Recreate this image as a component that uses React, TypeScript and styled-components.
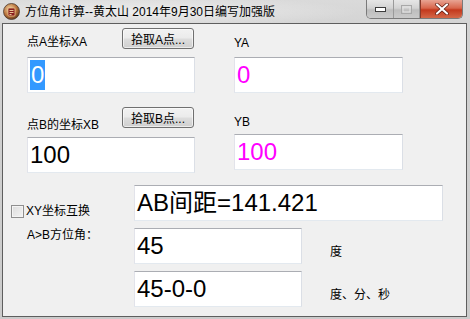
import styled, { createGlobalStyle } from "styled-components";

const GlobalStyle = createGlobalStyle`
  html, body {
    margin: 0;
    padding: 0;
    background: #cfcfcf;
  }
  body {
    font-family: "Liberation Sans", "Noto Sans CJK SC", sans-serif;
    font-size: 12px;
    color: #000;
  }
`;

const Window = styled.div`
  width: 470px;
  height: 319px;
  display: flex;
  flex-direction: column;
  background: linear-gradient(180deg, #dadada 0%, #d2d2d2 10%, #cbcbcb 100%);
  box-sizing: border-box;
`;

const TitleBar = styled.div`
  height: 23px;
  display: flex;
  align-items: flex-start;
  flex-shrink: 0;
  background: radial-gradient(ellipse 220px 16px at 140px 12px, rgba(255,255,255,0.55), rgba(255,255,255,0) 100%);
`;

const TitleIcon = styled.svg`
  margin: 3px 0 0 3px;
  flex-shrink: 0;
`;

const TitleText = styled.div`
  margin: 5px 0 0 5px;
  font-size: 12px;
  line-height: 14px;
  white-space: nowrap;
  color: #000;
`;

const CaptionButtons = styled.div`
  margin-left: auto;
  margin-right: 7px;
  display: flex;
  height: 19px;
  border: 1px solid #7a7a7a;
  border-top: none;
  border-radius: 0 0 5px 5px;
  overflow: hidden;
  box-sizing: border-box;
`;

const CaptionButton = styled.div<{ $w: number; $close?: boolean }>`
  width: ${(p) => p.$w}px;
  height: 100%;
  display: flex;
  align-items: center;
  justify-content: center;
  box-sizing: border-box;
  border-left: ${(p) => (p.$close ? "1px solid #8a3a2a" : "none")};
  border-right: ${(p) => (p.$close ? "none" : "1px solid #9a9a9a")};
  background: ${(p) =>
    p.$close
      ? "linear-gradient(180deg, #e8a493 0%, #d8664c 45%, #c3391d 55%, #d46848 100%)"
      : "linear-gradient(180deg, #e6e6e6 0%, #d3d3d3 45%, #bdbdbd 55%, #cacaca 100%)"};
`;

const Client = styled.div`
  flex: 1;
  margin: 0 3px 2px 2px;
  border: 1px solid #5e5e5e;
  background: #f0f0f0;
  padding-top: 4px;
  display: flex;
  flex-direction: column;
`;

const PairRow = styled.div<{ $top?: number }>`
  display: flex;
  margin-left: 24px;
  margin-top: ${(p) => p.$top ?? 0}px;
`;

const FieldCol = styled.div<{ $w: number; $left?: number }>`
  width: ${(p) => p.$w}px;
  margin-left: ${(p) => p.$left ?? 0}px;
  display: flex;
  flex-direction: column;
`;

const FieldHead = styled.div<{ $h: number }>`
  height: ${(p) => p.$h}px;
  display: flex;
  justify-content: space-between;
  align-items: flex-start;
`;

const Label = styled.div<{ $top?: number }>`
  margin-top: ${(p) => p.$top ?? 0}px;
  font-size: 12px;
  line-height: 15px;
  white-space: nowrap;
`;

const PickButton = styled.button`
  width: 72px;
  height: 21px;
  margin: 0 1px 0 0;
  padding: 0;
  font-family: inherit;
  font-size: 12px;
  color: #000;
  border: 1px solid #707070;
  border-radius: 3px;
  background: linear-gradient(180deg, #f2f2f2 0%, #ebebeb 48%, #dddddd 52%, #cfcfcf 100%);
  box-shadow: inset 0 0 0 1px rgba(255, 255, 255, 0.6);
`;

const Box = styled.div<{ $w?: number; $color?: string }>`
  width: ${(p) => (p.$w ? `${p.$w}px` : "auto")};
  height: 36px;
  box-sizing: border-box;
  background: #fff;
  border: 1px solid;
  border-color: #abadb3 #dbdfe6 #e3e9ef #e2e3ea;
  display: flex;
  align-items: center;
  padding-left: 2px;
  font-size: 24px;
  line-height: 30px;
  color: ${(p) => p.$color ?? "#000"};
  white-space: nowrap;
  overflow: hidden;
`;

const Selected = styled.span`
  background: #3399ff;
  color: #fff;
  padding: 0 1px;
`;

const Bottom = styled.div`
  margin-top: 12px;
  display: grid;
  grid-template-columns: 131px 168px 1fr;
  grid-template-rows: 36px 36px 36px;
  row-gap: 7px;
`;

const Side = styled.div`
  grid-row: 1 / span 3;
  grid-column: 1;
  padding: 19px 0 0 8px;
  display: flex;
  flex-direction: column;
`;

const CheckRow = styled.label`
  display: flex;
  align-items: center;
  gap: 2px;
  height: 14px;
  font-size: 12px;
  line-height: 14px;
`;

const CheckBox = styled.span`
  width: 13px;
  height: 13px;
  box-sizing: border-box;
  border: 1px solid #8f8f8f;
  background: linear-gradient(135deg, #dcdcdc 0%, #f4f4f4 100%);
  box-shadow: inset 0 0 0 1px #f4f4f4;
`;

const AngleLabel = styled.div`
  margin: 10px 0 0 16px;
  font-size: 12px;
  line-height: 14px;
  white-space: nowrap;
`;

const DistBox = styled(Box)`
  grid-column: 2 / span 2;
`;

const Unit = styled.div`
  align-self: end;
  padding: 0 0 5px 28px;
  font-size: 12px;
  line-height: 14px;
  white-space: nowrap;
`;

function AppIcon() {
  return (
    <TitleIcon width="17" height="17" viewBox="0 0 17 17">
      <defs>
        <radialGradient id="ig" cx="0.4" cy="0.35" r="0.7">
          <stop offset="0" stopColor="#f4d7a8" />
          <stop offset="0.6" stopColor="#b9733a" />
          <stop offset="1" stopColor="#5c3318" />
        </radialGradient>
      </defs>
      <circle cx="8.5" cy="8.5" r="8" fill="url(#ig)" stroke="#4a3a30" strokeWidth="0.8" />
      <rect x="5" y="5" width="7" height="8" rx="1" fill="#8a1f1f" stroke="#e9c08a" strokeWidth="0.8" />
      <path d="M6.5 7.5h4M6.5 9.5h4M6.5 11.5h2" stroke="#f3d6a0" strokeWidth="0.9" />
    </TitleIcon>
  );
}

export default function App() {
  return (
    <>
      <GlobalStyle />
      <Window>
        <TitleBar>
          <AppIcon />
          <TitleText>方位角计算--黄太山 2014年9月30日编写加强版</TitleText>
          <CaptionButtons>
            <CaptionButton $w={27}>
              <svg width="11" height="5" viewBox="0 0 11 5">
                <rect x="0.5" y="0.5" width="10" height="4" fill="#fff" stroke="#3c3c3c" />
              </svg>
            </CaptionButton>
            <CaptionButton $w={26}>
              <svg width="11" height="9" viewBox="0 0 11 9">
                <rect x="0.5" y="0.5" width="10" height="8" fill="none" stroke="#a8a8a8" />
                <rect x="2" y="2" width="7" height="5" fill="none" stroke="#e4e4e4" />
              </svg>
            </CaptionButton>
            <CaptionButton $w={42} $close>
              <svg width="14" height="12" viewBox="0 0 14 12">
                <path d="M2 1.5 L12 10.5 M12 1.5 L2 10.5" stroke="#5a1a10" strokeWidth="3.6" strokeLinecap="round" />
                <path d="M2 1.5 L12 10.5 M12 1.5 L2 10.5" stroke="#fff" strokeWidth="2.2" strokeLinecap="round" />
              </svg>
            </CaptionButton>
          </CaptionButtons>
        </TitleBar>
        <Client>
          <PairRow>
            <FieldCol $w={168}>
              <FieldHead $h={29}>
                <Label $top={7}>点A坐标XA</Label>
                <PickButton>拾取A点...</PickButton>
              </FieldHead>
              <Box>
                <Selected>0</Selected>
              </Box>
            </FieldCol>
            <FieldCol $w={169} $left={39}>
              <FieldHead $h={29}>
                <Label $top={8}>YA</Label>
              </FieldHead>
              <Box $color="#ff00ff">0</Box>
            </FieldCol>
          </PairRow>
          <PairRow $top={14}>
            <FieldCol $w={168}>
              <FieldHead $h={30}>
                <Label $top={11}>点B的坐标XB</Label>
                <PickButton>拾取B点...</PickButton>
              </FieldHead>
              <Box>100</Box>
            </FieldCol>
            <FieldCol $w={169} $left={39}>
              <FieldHead $h={27}>
                <Label $top={8}>YB</Label>
              </FieldHead>
              <Box $color="#ff00ff">100</Box>
            </FieldCol>
          </PairRow>
          <Bottom>
            <Side>
              <CheckRow>
                <CheckBox />
                XY坐标互换
              </CheckRow>
              <AngleLabel>A&gt;B方位角：</AngleLabel>
            </Side>
            <DistBox $w={309}>AB间距=141.421</DistBox>
            <Box $w={168}>45</Box>
            <Unit>度</Unit>
            <Box $w={168}>45-0-0</Box>
            <Unit>度、分、秒</Unit>
          </Bottom>
        </Client>
      </Window>
    </>
  );
}
